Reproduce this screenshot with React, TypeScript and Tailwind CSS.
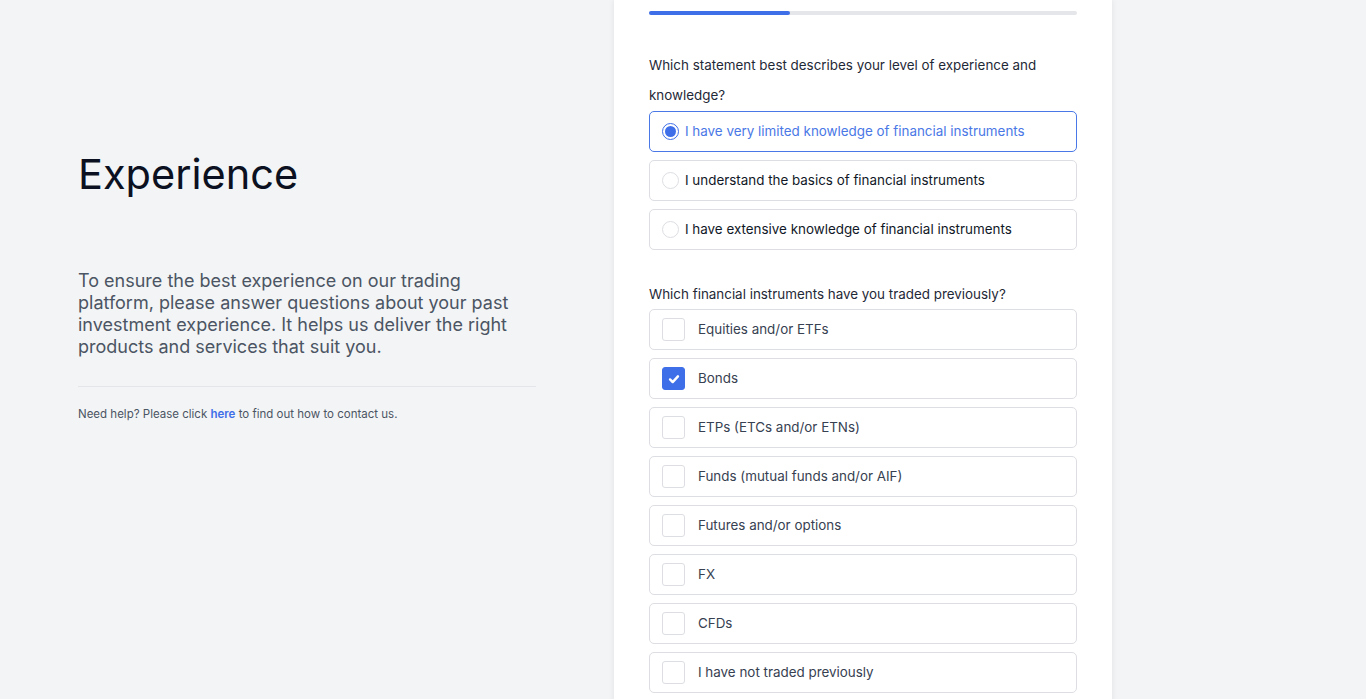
import { useState } from "react";

const levels = [
  "I have very limited knowledge of financial instruments",
  "I understand the basics of financial instruments",
  "I have extensive knowledge of financial instruments",
];

const instruments = [
  "Equities and/or ETFs",
  "Bonds",
  "ETPs (ETCs and/or ETNs)",
  "Funds (mutual funds and/or AIF)",
  "Futures and/or options",
  "FX",
  "CFDs",
  "I have not traded previously",
];

function RadioOption({ label, selected, onSelect }: { label: string; selected: boolean; onSelect: () => void }) {
  return (
    <button
      type="button"
      onClick={onSelect}
      className={`flex h-[41px] w-full items-center gap-[6px] rounded-[5px] border bg-white px-[12px] text-left text-[13.4px] ${
        selected ? "border-[#4a78e6] text-[#4a78e6]" : "border-[#dcdee3] text-[#111827]"
      }`}
    >
      <span
        className={`flex h-[17px] w-[17px] shrink-0 items-center justify-center rounded-full border-[1.5px] ${
          selected ? "border-[#3f6fe8]" : "border-[#dcdee3]"
        }`}
      >
        {selected && <span className="h-[11px] w-[11px] rounded-full bg-[#3f6fe8]" />}
      </span>
      <span>{label}</span>
    </button>
  );
}

function CheckOption({ label, checked, onToggle }: { label: string; checked: boolean; onToggle: () => void }) {
  return (
    <button
      type="button"
      onClick={onToggle}
      className="flex h-[41px] w-full items-center gap-[13px] rounded-[5px] border border-[#dcdee3] bg-white px-[12px] text-left text-[13.4px] text-[#374151]"
    >
      <span
        className={`flex h-[23px] w-[23px] shrink-0 items-center justify-center rounded-[3px] border ${
          checked ? "border-[#3f6fe8] bg-[#3f6fe8]" : "border-[#dcdee3] bg-white"
        }`}
      >
        {checked && (
          <svg viewBox="0 0 16 16" className="h-[14px] w-[14px]" fill="none" stroke="white" strokeWidth={2.8} strokeLinecap="round" strokeLinejoin="round">
            <path d="M3.5 8.5l3 3 6-6.5" />
          </svg>
        )}
      </span>
      <span>{label}</span>
    </button>
  );
}

export default function App() {
  const [level, setLevel] = useState(0);
  const [traded, setTraded] = useState<string[]>(["Bonds"]);

  const toggle = (item: string) =>
    setTraded(t => (t.includes(item) ? t.filter(x => x !== item) : [...t, item]));

  return (
    <div className="flex min-h-screen gap-[78px] bg-[#f3f4f6] pl-[78px] font-['Inter',sans-serif]">
      {/* Intro column */}
      <div className="w-[458px] shrink-0 pt-[146px]">
        <h1 className="text-[41.5px] leading-[56px] font-normal text-[#0b1120]">Experience</h1>
        <p className="mt-[68px] text-[18px] leading-[22px] text-[#4b5563]">
          To ensure the best experience on our trading platform, please answer questions about your past investment experience. It helps us deliver the right products and services that suit you.
        </p>
        <div className="mt-[28px] border-t border-[#e3e5e9]" />
        <p className="mt-[19px] text-[11.5px] text-[#4b5563]">
          Need help? Please click <a href="#" className="font-semibold text-[#3f6fe8]">here</a> to find out how to contact us.
        </p>
      </div>

      {/* Questionnaire card */}
      <div className="w-[498px] shrink-0 bg-white px-[35px] pt-[11px] pb-8 shadow-[0_0_6px_rgba(0,0,0,0.08)]">
        <div className="h-[4px] w-full rounded-full bg-[#e5e6e9]">
          <div className="h-full w-[33%] rounded-full bg-[#3f6fe8]" />
        </div>

        <p className="mt-[35px] text-[13.4px] leading-[30px] text-[#1f2937]">
          Which statement best describes your level of experience and knowledge?
        </p>
        <div className="mt-px flex flex-col gap-[8px]">
          {levels.map((l, i) => (
            <RadioOption key={l} label={l} selected={level === i} onSelect={() => setLevel(i)} />
          ))}
        </div>

        <p className="mt-[29px] text-[13.4px] leading-[30px] text-[#1f2937]">
          Which financial instruments have you traded previously?
        </p>
        <div className="flex flex-col gap-[8px]">
          {instruments.map(item => (
            <CheckOption key={item} label={item} checked={traded.includes(item)} onToggle={() => toggle(item)} />
          ))}
        </div>
      </div>
    </div>
  );
}
